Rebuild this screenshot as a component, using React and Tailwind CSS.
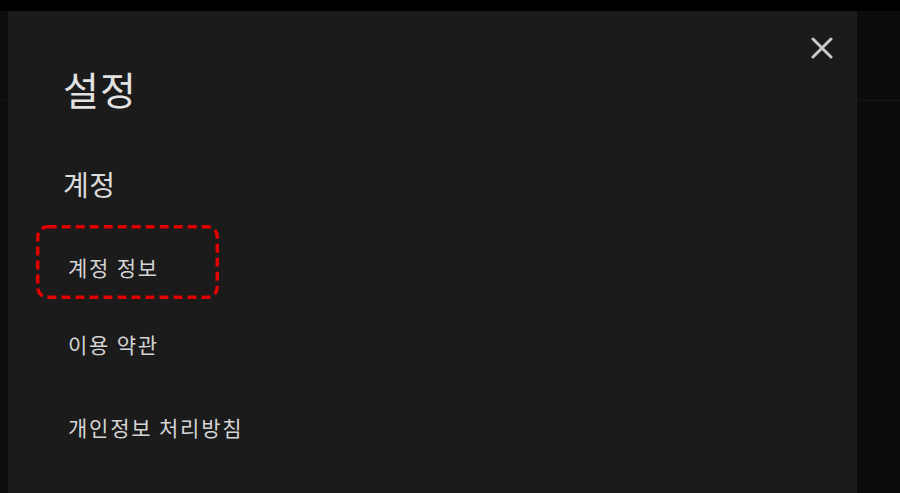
export default function App() {
  return (
    <div className="w-[900px] h-[493px] bg-black overflow-hidden flex flex-col" style={{ fontFamily: '"Noto Sans CJK KR", "Noto Sans", sans-serif' }}>
      <div className="h-[11px] bg-black shrink-0" />
      <div className="flex flex-1 min-h-0">
        <div className="w-[8px] bg-[#0d0d0d] flex flex-col">
          <div className="h-[89px]" />
          <div className="h-px bg-[#151515]" />
        </div>
        <div className="relative flex-1 bg-[#1b1b1b] pl-[55px] pt-[54px]">
          <button className="absolute right-[24px] top-[26px] w-[22px] h-[22px] flex items-center justify-center text-[#c9c9c9]">
            <svg width="22" height="22" viewBox="0 0 22 22" fill="none" stroke="currentColor" strokeWidth="3" strokeLinecap="round">
              <path d="M2 2L20 20M20 2L2 20" />
            </svg>
          </button>
          <h1 className="text-[39px] leading-[46px] tracking-[1px] text-[#e2e2e2] font-normal">설정</h1>
          <h2 className="mt-[55px] text-[28px] leading-[36px] tracking-[0.5px] text-[#dcdcdc] font-normal">계정</h2>
          <ul className="mt-[23px] -ml-[27px] flex flex-col text-[21px] tracking-[1.8px] text-[#d4d4d4]">
            <li className="relative w-[183px] h-[74px] pl-[32px] pt-[10px] flex items-center">
              <svg className="absolute inset-0" width="183" height="74" viewBox="0 0 183 74" fill="none">
                <rect x="1.75" y="1.75" width="179.5" height="70.5" rx="10" stroke="#e00000" strokeWidth="3.5" strokeDasharray="9 5" />
              </svg>
              <span className="leading-none">계정 정보</span>
            </li>
            <li className="h-[80px] pl-[32px] flex items-center mt-[6px]">이용 약관</li>
            <li className="h-[86px] pl-[32px] flex items-center">개인정보 처리방침</li>
          </ul>
        </div>
        <div className="w-[43px] bg-[#0c0c0c] flex flex-col">
          <div className="h-[89px]" />
          <div className="h-px bg-[#161616]" />
        </div>
      </div>
    </div>
  );
}
